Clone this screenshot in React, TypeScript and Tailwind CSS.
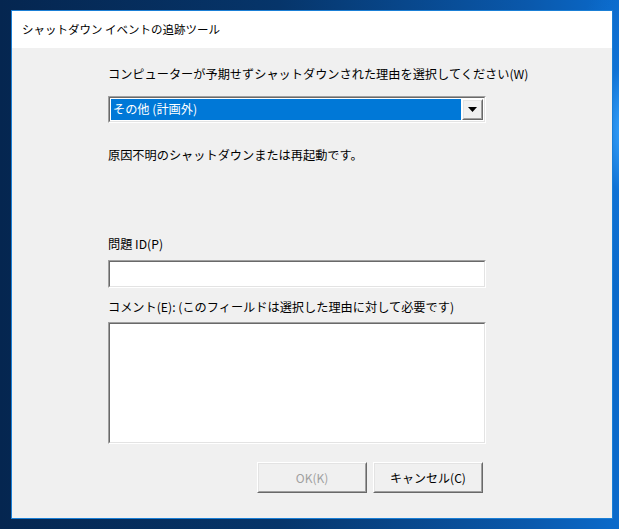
import type { ReactNode } from "react";

// Shutdown Event Tracker dialog on a Windows 10 style desktop.

const font = { fontFamily: '"Noto Sans CJK JP", "Noto Sans", sans-serif' };

// Classic sunken 3D edge used by edit boxes and the combo box.
function Sunken({ className, children }: { className?: string; children?: ReactNode }) {
  return (
    <div
      className={`border border-t-[#a0a0a0] border-l-[#a0a0a0] border-b-white border-r-white ${className ?? ""}`}
    >
      <div className="h-full w-full border border-t-[#696969] border-l-[#696969] border-b-[#e3e3e3] border-r-[#e3e3e3] bg-white">
        {children}
      </div>
    </div>
  );
}

function PushButton({ children, disabled }: { children: ReactNode; disabled?: boolean }) {
  return (
    <div className="h-[31px] w-[110px] border border-t-white border-l-white border-b-[#696969] border-r-[#696969]">
      <div
        className={`flex h-full w-full items-center justify-center border border-t-[#e3e3e3] border-l-[#e3e3e3] border-b-[#a0a0a0] border-r-[#a0a0a0] bg-[#f0f0f0] text-[12px] ${
          disabled ? "text-[#a0a0a0]" : "text-black"
        }`}
      >
        {children}
      </div>
    </div>
  );
}

function ReasonCombo() {
  return (
    <Sunken className="h-[27px] w-[378px]">
      <div className="flex h-full items-stretch p-px">
        <div className="flex flex-1 items-center bg-[#0078d7] pl-[2px] text-[12.2px] leading-none text-white">
          その他 (計画外)
        </div>
        <div className="ml-px w-[21px] border border-t-white border-l-white border-b-[#696969] border-r-[#696969]">
          <div className="flex h-full w-full items-center justify-center border border-t-[#e3e3e3] border-l-[#e3e3e3] border-b-[#a0a0a0] border-r-[#a0a0a0] bg-[#f0f0f0]">
            <svg width="9" height="5" viewBox="0 0 9 5">
              <path d="M0 0H9L4.5 5Z" fill="#000" />
            </svg>
          </div>
        </div>
      </div>
    </Sunken>
  );
}

export default function App() {
  return (
    <div
      className="h-[529px] w-[619px] overflow-hidden pl-[11px] pt-[10px]"
      style={{
        ...font,
        background:
          "radial-gradient(ellipse 60px 160px at 625px 130px, #3aa6ff 0%, rgba(20,120,220,0.6) 40%, rgba(10,80,170,0) 100%), linear-gradient(90deg, #052650 0%, #06356a 45%, #0a58ab 85%, #0a6acb 100%)",
      }}
    >
      <div className="flex h-[509px] w-[602px] flex-col border border-[#1a7fd6]">
        <div className="flex h-[37px] items-center bg-white pl-[10px] text-[11.5px] leading-none text-black">
          シャットダウン イベントの追跡ツール
        </div>

        <div className="flex flex-1 flex-col bg-[#f0f0f0] pl-[96px] text-[12.2px] leading-[16px] text-black">
          <div className="mt-[18px] whitespace-nowrap">
            コンピューターが予期せずシャットダウンされた理由を選択してください(W)
          </div>
          <div className="mt-[14px]">
            <ReasonCombo />
          </div>
          <div className="mt-[24px]">原因不明のシャットダウンまたは再起動です。</div>

          <div className="mt-[73px]">問題 ID(P)</div>
          <Sunken className="mt-[8px] h-[28px] w-[378px]" />

          <div className="mt-[11px] whitespace-nowrap">
            コメント(E): (このフィールドは選択した理由に対して必要です)
          </div>
          <Sunken className="mt-[7px] h-[122px] w-[378px]" />

          <div className="mt-[18px] flex w-[378px] justify-end gap-[6px] pr-[3px]">
            <PushButton disabled>OK(K)</PushButton>
            <PushButton>キャンセル(C)</PushButton>
          </div>
        </div>
      </div>
    </div>
  );
}
